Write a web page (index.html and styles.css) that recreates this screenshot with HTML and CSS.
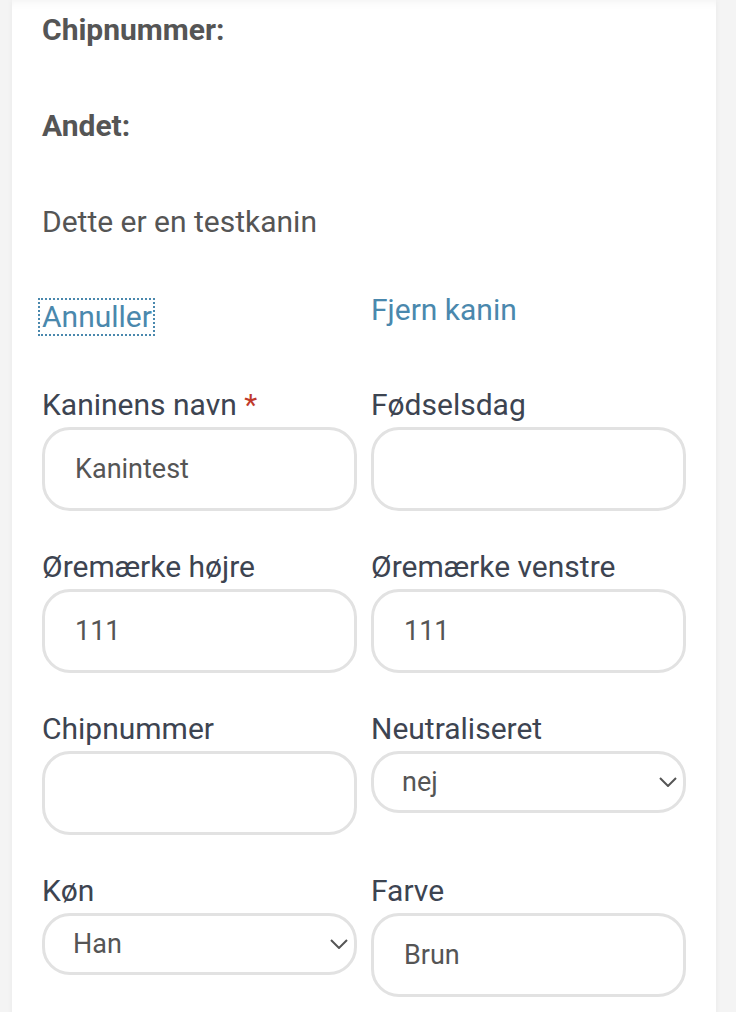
FILE: index.html
```html
<!DOCTYPE html>
<html lang="da">
<head>
<meta charset="UTF-8">
<meta name="viewport" content="width=device-width, initial-scale=1.0">
<title>Rediger kanin</title>
<link rel="stylesheet" href="styles.css">
</head>
<body>

<div class="kort">
    <p class="info"><strong>Chipnummer:</strong></p>
    <p class="info"><strong>Andet:</strong></p>
    <p class="info">Dette er en testkanin</p>

    <div class="handlinger">
        <button type="button" class="linkKnap fokus">Annuller</button>
        <a href="#" class="link">Fjern kanin</a>
    </div>

    <form class="kaninForm">
        <div class="felt">
            <label for="navn">Kaninens navn <span class="krav">*</span></label>
            <input type="text" id="navn" value="Kanintest">
        </div>
        <div class="felt">
            <label for="foedselsdag">Fødselsdag</label>
            <input type="text" id="foedselsdag">
        </div>

        <div class="felt">
            <label for="oereHoejre">Øremærke højre</label>
            <input type="text" id="oereHoejre" value="111">
        </div>
        <div class="felt">
            <label for="oereVenstre">Øremærke venstre</label>
            <input type="text" id="oereVenstre" value="111">
        </div>

        <div class="felt">
            <label for="chip">Chipnummer</label>
            <input type="text" id="chip">
        </div>
        <div class="felt">
            <label for="neutral">Neutraliseret</label>
            <div class="vaelger">
                <select id="neutral">
                    <option>nej</option>
                    <option>ja</option>
                </select>
                <svg class="pil" width="18" height="10" viewBox="0 0 18 10"><path d="M1 1 L9 9 L17 1" fill="none" stroke="#555" stroke-width="2"/></svg>
            </div>
        </div>

        <div class="felt">
            <label for="koen">Køn</label>
            <div class="vaelger">
                <select id="koen">
                    <option>Han</option>
                    <option>Hun</option>
                </select>
                <svg class="pil" width="18" height="10" viewBox="0 0 18 10"><path d="M1 1 L9 9 L17 1" fill="none" stroke="#555" stroke-width="2"/></svg>
            </div>
        </div>
        <div class="felt">
            <label for="farve">Farve</label>
            <input type="text" id="farve" value="Brun">
        </div>
    </form>
</div>

</body>
</html>
```

FILE: styles.css
```css
body {
    margin: 0;
    background-color: #f4f4f4;
    font-family: Roboto, "Liberation Sans", sans-serif;
}

.kort {
    margin: 0 20px 0 12px;
    padding: 14px 30px 40px 30px;
    background-color: #fff;
    min-height: 1012px;
    box-sizing: border-box;
    box-shadow: 0 0 6px rgba(0, 0, 0, 0.05), inset 0 10px 10px -8px rgba(0, 0, 0, 0.05);
}

.info {
    margin: 0 0 64px 0;
    font-size: 30px;
    line-height: 32px;
    color: #555;
}

.info:nth-of-type(3) {
    margin-bottom: 56px;
}

.handlinger {
    display: grid;
    grid-template-columns: 1fr 1fr;
    column-gap: 14px;
    align-items: start;
}

.linkKnap {
    justify-self: start;
    margin: 6px 0 0 -2px;
    padding: 1px 1px 1px 2px;
    border: none;
    background: none;
    font-family: inherit;
    font-size: 30px;
    line-height: 32px;
    color: #4a88ad;
}

.fokus {
    outline: 2px dotted #4a88ad;
}

.link {
    font-size: 30px;
    line-height: 32px;
    color: #4a88ad;
    text-decoration: none;
}

.kaninForm {
    display: grid;
    grid-template-columns: 1fr 1fr;
    column-gap: 14px;
    row-gap: 40px;
    align-items: start;
    margin-top: 55px;
}

.felt label {
    display: block;
    margin-bottom: 6px;
    font-size: 30px;
    line-height: 32px;
    color: #3d4451;
}

.krav {
    color: #c0392b;
}

.felt input,
.felt select {
    display: block;
    width: 100%;
    box-sizing: border-box;
    height: 84px;
    padding: 0 30px;
    border: 3px solid #e2e2e2;
    border-radius: 28px;
    background-color: #fff;
    font-family: inherit;
    font-size: 27px;
    color: #555;
    outline: none;
}

.vaelger {
    position: relative;
}

.felt select {
    height: 62px;
    padding-left: 28px;
    appearance: none;
    -webkit-appearance: none;
}

.pil {
    position: absolute;
    right: 9px;
    top: 26px;
}
```
